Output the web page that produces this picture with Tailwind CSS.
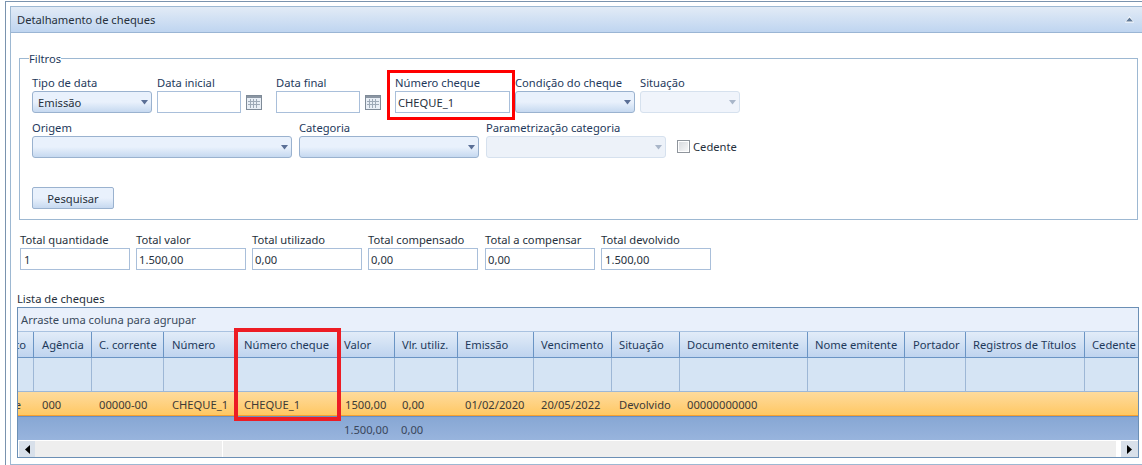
<!DOCTYPE html>
<html lang="pt-BR">
<head>
  <meta charset="UTF-8" />
  <title>Detalhamento de cheques</title>
  <script src="https://cdn.jsdelivr.net/npm/@tailwindcss/browser@4"></script>
</head>
<body class="relative w-[1142px] h-[465px] overflow-hidden bg-white font-['Noto_Sans',sans-serif] text-[11.2px] leading-[15px] text-[#1e395b]">

  <div class="ml-[5px] mt-[1px] pl-[4px] pt-[4px] border-l border-t border-[#7a93ae]">
    <div class="h-[459px] border-l border-t border-b border-[#9db8d2]">

      <!-- Panel header -->
      <div class="h-[26px] flex items-center justify-between pl-[6px] pr-[8px] border-b border-[#9ab5d4] bg-linear-to-b from-[#e2ebf6] to-[#bfd5f0] text-[#26303c]">
        <span>Detalhamento de cheques</span>
        <svg width="9" height="7" viewBox="0 0 9 7"><polygon points="4.5,0 9,6.5 0,6.5" fill="#ffffff"/><polygon points="4.5,1.5 8,5.5 1,5.5" fill="#5f7896"/></svg>
      </div>

      <!-- Filtros -->
      <fieldset class="ml-[8px] mt-[18px] w-[1119px] h-[169px] px-[12px] border border-[#9db8d2]">
        <legend class="ml-[-3px] pl-0 pr-0 h-[15px]">Filtros</legend>

        <div class="flex mt-[10px]">
          <div class="w-[120px]">
            <div class="h-[15px] leading-[13px]">Tipo de data</div>
            <div class="relative h-[22px] pl-[5px] flex items-center rounded-[3px] border border-[#9ab2cf] bg-linear-to-b from-[#e9f1fc] from-50% to-[#c6d9f0] text-[#26303c]">Emissão
              <svg class="absolute right-[3px] top-[8px]" width="7" height="5" viewBox="0 0 7 5"><polygon points="0,0 7,0 3.5,4.5" fill="#5a6f96"/></svg>
            </div>
          </div>
          <div class="ml-[5px] w-[84px]">
            <div class="h-[15px] leading-[13px]">Data inicial</div>
            <div class="h-[22px] border border-[#a9bfda] bg-white"></div>
          </div>
          <svg class="ml-[5px] mt-[19px]" width="16" height="15" viewBox="0 0 16 15"><rect x="0.5" y="0.5" width="15" height="14" fill="#e8eef5" stroke="#7f8b98"/><rect x="1" y="1" width="14" height="2" fill="#8b96a3"/><path d="M4.5 4v9M7.5 4v9M10.5 4v9M2 6.5h12M2 9.5h12" stroke="#9eaab7" fill="none"/></svg>
          <div class="ml-[14px] w-[84px]">
            <div class="h-[15px] leading-[13px]">Data final</div>
            <div class="h-[22px] border border-[#a9bfda] bg-white"></div>
          </div>
          <svg class="ml-[5px] mt-[19px]" width="16" height="15" viewBox="0 0 16 15"><rect x="0.5" y="0.5" width="15" height="14" fill="#e8eef5" stroke="#7f8b98"/><rect x="1" y="1" width="14" height="2" fill="#8b96a3"/><path d="M4.5 4v9M7.5 4v9M10.5 4v9M2 6.5h12M2 9.5h12" stroke="#9eaab7" fill="none"/></svg>
          <div class="ml-[14px] w-[115px]">
            <div class="h-[15px] leading-[13px]">Número cheque</div>
            <div class="h-[22px] pl-[2px] flex items-center border border-[#a9bfda] bg-white text-[#26303c]">CHEQUE_1</div>
          </div>
          <div class="ml-[5px] w-[120px]">
            <div class="h-[15px] leading-[13px]">Condição do cheque</div>
            <div class="relative h-[22px] rounded-[3px] border border-[#9ab2cf] bg-linear-to-b from-[#e9f1fc] from-50% to-[#c6d9f0]">
              <svg class="absolute right-[3px] top-[8px]" width="7" height="5" viewBox="0 0 7 5"><polygon points="0,0 7,0 3.5,4.5" fill="#5a6f96"/></svg>
            </div>
          </div>
          <div class="ml-[5px] w-[100px]">
            <div class="h-[15px] leading-[13px]">Situação</div>
            <div class="relative h-[22px] rounded-[3px] border border-[#d6e1ee] bg-[#f0f4fb]">
              <svg class="absolute right-[3px] top-[8px]" width="7" height="5" viewBox="0 0 7 5"><polygon points="0,0 7,0 3.5,4.5" fill="#a9b6c9"/></svg>
            </div>
          </div>
        </div>

        <div class="flex mt-[8px]">
          <div class="w-[260px]">
            <div class="h-[15px] leading-[13px]">Origem</div>
            <div class="relative h-[22px] rounded-[3px] border border-[#9ab2cf] bg-linear-to-b from-[#e9f1fc] from-50% to-[#c6d9f0]">
              <svg class="absolute right-[3px] top-[8px]" width="7" height="5" viewBox="0 0 7 5"><polygon points="0,0 7,0 3.5,4.5" fill="#5a6f96"/></svg>
            </div>
          </div>
          <div class="ml-[7px] w-[180px]">
            <div class="h-[15px] leading-[13px]">Categoria</div>
            <div class="relative h-[22px] rounded-[3px] border border-[#9ab2cf] bg-linear-to-b from-[#e9f1fc] from-50% to-[#c6d9f0]">
              <svg class="absolute right-[3px] top-[8px]" width="7" height="5" viewBox="0 0 7 5"><polygon points="0,0 7,0 3.5,4.5" fill="#5a6f96"/></svg>
            </div>
          </div>
          <div class="ml-[7px] w-[180px]">
            <div class="h-[15px] leading-[13px]">Parametrização categoria</div>
            <div class="relative h-[22px] rounded-[3px] border border-[#d6e1ee] bg-[#edf2f9]">
              <svg class="absolute right-[3px] top-[8px]" width="7" height="5" viewBox="0 0 7 5"><polygon points="0,0 7,0 3.5,4.5" fill="#a9b6c9"/></svg>
            </div>
          </div>
          <div class="ml-[11px] mt-[14px] h-[22px] flex items-center text-[#26303c]">
            <span class="w-[13px] h-[13px] mr-[3px] border border-[#8f959c] bg-linear-to-br from-[#d5d8dc] to-[#fafafa] shadow-[inset_0_0_0_1px_#ffffff]"></span>Cedente
          </div>
        </div>

        <button class="block mt-[29px] w-[82px] h-[22px] rounded-[2px] border border-[#9ab2cf] bg-linear-to-b from-[#e9f1fc] from-50% to-[#c6d9f0] text-[#26303c]">Pesquisar</button>
      </fieldset>

      <!-- Totais -->
      <div class="flex gap-[6px] ml-[9px] mt-[13px] text-[#26303c]">
        <div class="w-[110px]">
          <div class="h-[15px] leading-[13px]">Total quantidade</div>
          <div class="h-[22px] pl-[3px] flex items-center border border-[#a9bfda]">1</div>
        </div>
        <div class="w-[110px]">
          <div class="h-[15px] leading-[13px]">Total valor</div>
          <div class="h-[22px] pl-[2px] flex items-center border border-[#a9bfda]">1.500,00</div>
        </div>
        <div class="w-[110px]">
          <div class="h-[15px] leading-[13px]">Total utilizado</div>
          <div class="h-[22px] pl-[2px] flex items-center border border-[#a9bfda]">0,00</div>
        </div>
        <div class="w-[110px]">
          <div class="h-[15px] leading-[13px]">Total compensado</div>
          <div class="h-[22px] pl-[2px] flex items-center border border-[#a9bfda]">0,00</div>
        </div>
        <div class="ml-[1px] w-[110px]">
          <div class="h-[15px] leading-[13px]">Total a compensar</div>
          <div class="h-[22px] pl-[2px] flex items-center border border-[#a9bfda]">0,00</div>
        </div>
        <div class="w-[110px]">
          <div class="h-[15px] leading-[13px]">Total devolvido</div>
          <div class="h-[22px] pl-[3px] flex items-center border border-[#a9bfda]">1.500,00</div>
        </div>
      </div>

      <!-- Lista -->
      <div class="ml-[6px] mt-[22px] h-[15px] leading-[13px] text-[#26303c]">Lista de cheques</div>
      <div class="ml-[6px] w-[1122px] h-[151px] border border-[#6b8fb5]">
        <div class="h-[24px] pl-[3px] flex items-center bg-[#e9f0fb] border-b border-[#a9c2e0] text-[#3a4a5c]">Arraste uma coluna para agrupar</div>

        <div class="h-[26px] grid grid-cols-[16px_58px_72px_72px_103px_56px_63px_76px_78px_68px_128px_97px_61px_119px_53px] border-b border-[#6a94c4] bg-linear-to-b from-[#e2ecf8] to-[#bfd4ef] whitespace-nowrap overflow-hidden">
          <div class="flex items-center justify-end pr-[7px] border-r border-[#6a94c4]">to</div>
          <div class="flex items-center pl-[8px] border-r border-[#6a94c4]">Agência</div>
          <div class="flex items-center pl-[7px] border-r border-[#6a94c4]">C. corrente</div>
          <div class="flex items-center pl-[8px] border-r border-[#6a94c4]">Número</div>
          <div class="flex items-center pl-[8px] border-r border-[#6a94c4]">Número cheque</div>
          <div class="flex items-center pl-[5px] border-r border-[#6a94c4]">Valor</div>
          <div class="flex items-center pl-[7px] border-r border-[#6a94c4]">Vlr. utiliz.</div>
          <div class="flex items-center pl-[7px] border-r border-[#6a94c4]">Emissão</div>
          <div class="flex items-center pl-[7px] border-r border-[#6a94c4]">Vencimento</div>
          <div class="flex items-center pl-[7px] border-r border-[#6a94c4]">Situação</div>
          <div class="flex items-center pl-[7px] border-r border-[#6a94c4]">Documento emitente</div>
          <div class="flex items-center pl-[7px] border-r border-[#6a94c4]">Nome emitente</div>
          <div class="flex items-center pl-[8px] border-r border-[#6a94c4]">Portador</div>
          <div class="flex items-center pl-[7px] border-r border-[#6a94c4]">Registros de Títulos</div>
          <div class="flex items-center pl-[7px]">Cedente</div>
        </div>

        <div class="h-[34px] grid grid-cols-[16px_58px_72px_72px_103px_56px_63px_76px_78px_68px_128px_97px_61px_119px_53px] border-b border-[#9db7d6] bg-[#d5e4f4]">
          <div class="border-r border-[#9db7d6]"></div>
          <div class="border-r border-[#9db7d6]"></div>
          <div class="border-r border-[#9db7d6]"></div>
          <div class="border-r border-[#9db7d6]"></div>
          <div class="border-r border-[#9db7d6]"></div>
          <div class="border-r border-[#9db7d6]"></div>
          <div class="border-r border-[#9db7d6]"></div>
          <div class="border-r border-[#9db7d6]"></div>
          <div class="border-r border-[#9db7d6]"></div>
          <div class="border-r border-[#9db7d6]"></div>
          <div class="border-r border-[#9db7d6]"></div>
          <div class="border-r border-[#9db7d6]"></div>
          <div class="border-r border-[#9db7d6]"></div>
          <div class="border-r border-[#9db7d6]"></div>
          <div></div>
        </div>

        <div class="h-[25px] grid grid-cols-[16px_58px_72px_72px_103px_56px_63px_76px_78px_68px_128px_97px_61px_119px_53px] items-center border-b border-[#6a8fc0] shadow-[inset_0_-1px_0_#f5a030] bg-linear-to-b from-[#fedb9c] to-[#ffc75f] text-[#3d3a36] whitespace-nowrap overflow-hidden">
          <div class="flex justify-end pr-[13px] overflow-hidden">e</div>
          <div class="pl-[8px]">000</div>
          <div class="pl-[7px]">00000-00</div>
          <div class="pl-[8px]">CHEQUE_1</div>
          <div class="pl-[8px]">CHEQUE_1</div>
          <div class="pl-[6px]">1500,00</div>
          <div class="pl-[7px]">0,00</div>
          <div class="pl-[7px]">01/02/2020</div>
          <div class="pl-[7px]">20/05/2022</div>
          <div class="pl-[7px]">Devolvido</div>
          <div class="pl-[7px]">00000000000</div>
        </div>

        <div class="h-[23px] pt-[1px] grid grid-cols-[16px_58px_72px_72px_103px_56px_63px_76px_78px_68px_128px_97px_61px_119px_53px] items-center bg-linear-to-b from-[#87a7d4] to-[#98b4dd] text-[#39465a] whitespace-nowrap">
          <div></div><div></div><div></div><div></div><div></div>
          <div class="pl-[5px]">1.500,00</div>
          <div class="pl-[6px]">0,00</div>
        </div>

        <!-- Scrollbar -->
        <div class="h-[17px] flex border-t border-white bg-[#eeeeee]">
          <div class="w-[17px] flex items-center justify-center bg-[#d8e0ea] border-l border-white">
            <svg width="5" height="9" viewBox="0 0 5 9"><polygon points="5,0 5,9 0,4.5" fill="#000000"/></svg>
          </div>
          <div class="w-[187px]"></div>
          <div class="flex-1 border-l border-r-[5px] border-white"></div>
          <div class="w-[17px] flex items-center justify-center bg-[#d8e0ea]">
            <svg width="5" height="9" viewBox="0 0 5 9"><polygon points="0,0 0,9 5,4.5" fill="#000000"/></svg>
          </div>
        </div>
      </div>
    </div>
  </div>

  <!-- Red annotation boxes drawn over the screenshot -->
  <div class="absolute left-[387px] top-[70px] w-[128px] h-[50px] border-[3px] border-[#ff0000]"></div>
  <div class="absolute left-[234px] top-[328px] w-[107px] h-[93px] border-[4px] border-[#ed1c24]"></div>

</body>
</html>
